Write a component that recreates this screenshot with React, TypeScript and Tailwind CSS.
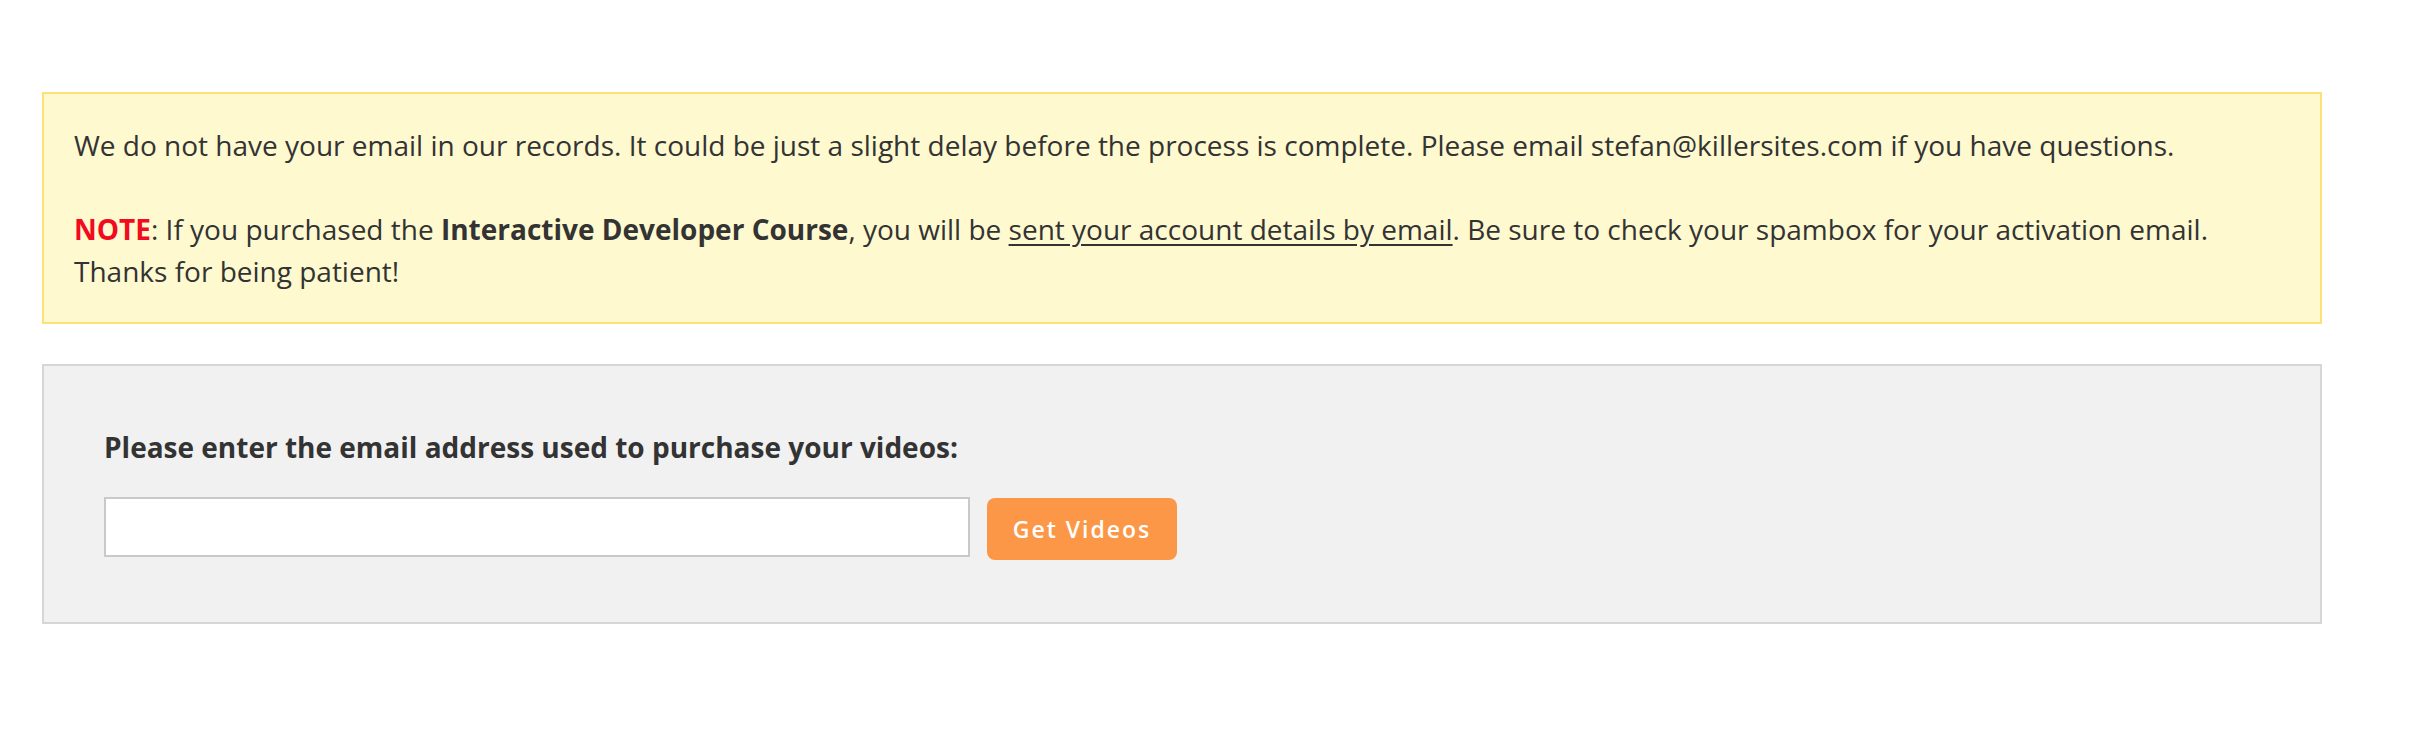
import React from "react";

export default function App() {
  return (
    <div
      className="min-h-[744px] bg-white pt-[92px] pl-[42px] text-[#333333]"
      style={{ fontFamily: '"Open Sans", "Noto Sans", sans-serif' }}
    >
      <div className="w-[2280px]">
        <div className="border-2 border-[#fbe07b] bg-[#fef9cf] p-[30px] text-[28px] leading-[42px]">
          <p>
            We do not have your email in our records. It could be just a slight delay before the process is complete. Please email stefan@killersites.com if you have questions.
          </p>
          <p className="mt-[42px]">
            <span className="font-bold text-[#f20a1e]">NOTE</span>: If you purchased the{" "}
            <span className="font-bold">Interactive Developer Course</span>, you will be{" "}
            <span className="underline underline-offset-[4px]">sent your account details by email</span>. Be sure to check your spambox for your activation email.
            <br />
            Thanks for being patient!
          </p>
        </div>

        <div className="mt-[40px] border-2 border-[#d6d6d6] bg-[#f1f1f1] px-[60px] pt-[60px] pb-[62px]">
          <p className="mb-[29px] text-[28px] font-bold leading-[42px]">
            Please enter the email address used to purchase your videos:
          </p>
          <div className="flex items-start gap-[17px]">
            <input
              type="text"
              className="h-[60px] w-[866px] border-2 border-[#c9c9c9] bg-white px-3 text-[24px] outline-none"
            />
            <button className="mt-[1px] flex h-[62px] w-[190px] items-center justify-center rounded-[8px] bg-[#fd9748] text-[23px] font-semibold tracking-[2px] text-white">
              Get Videos
            </button>
          </div>
        </div>
      </div>
    </div>
  );
}
